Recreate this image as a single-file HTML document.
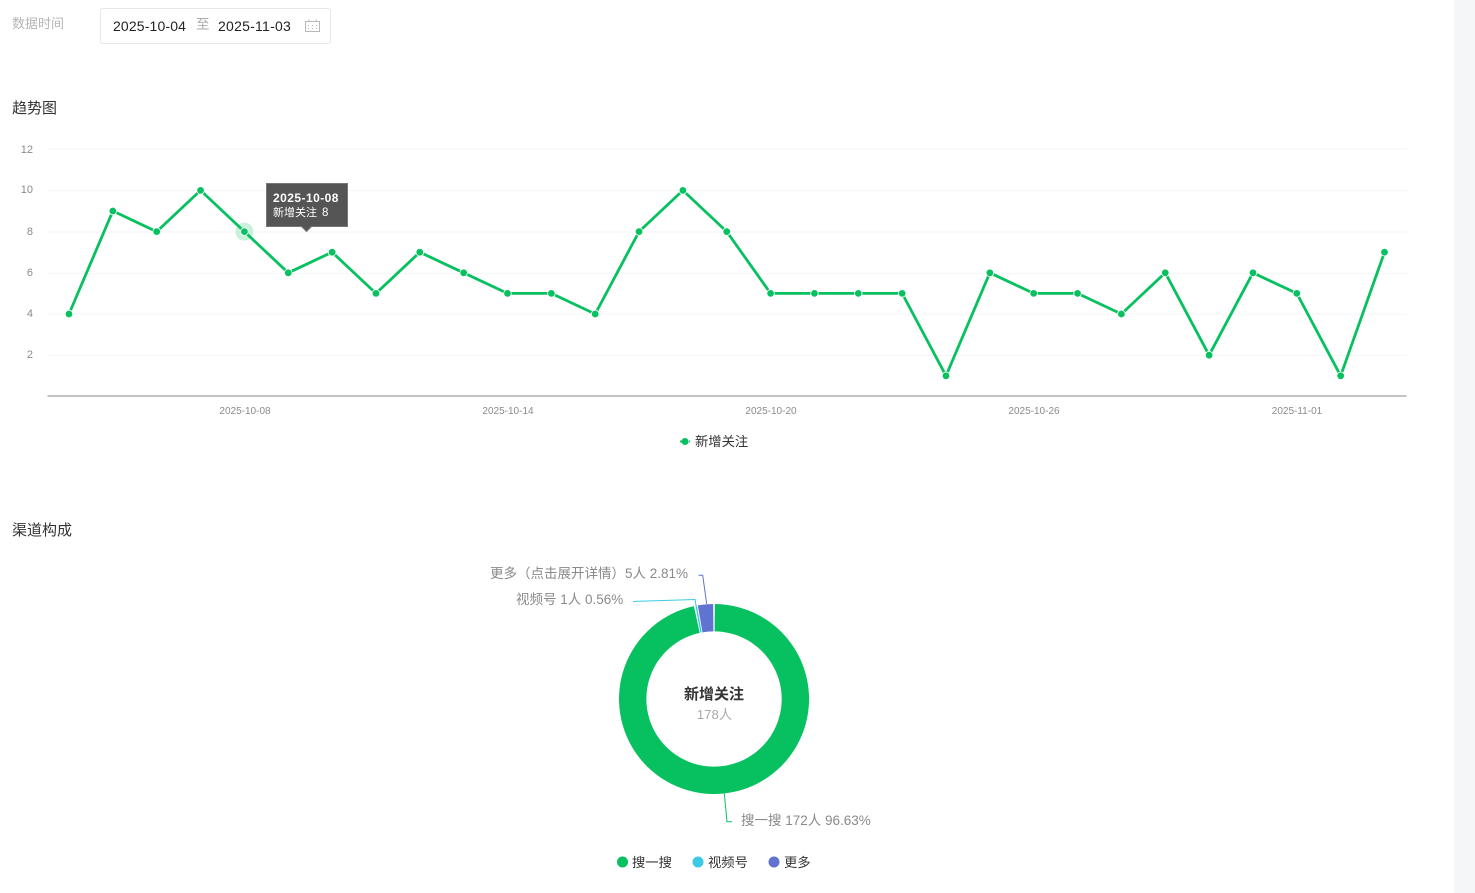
<!DOCTYPE html>
<html lang="zh-CN">
<head>
<meta charset="utf-8">
<title>数据趋势</title>
<style>
html,body{margin:0;padding:0;background:#fff;width:1475px;height:893px;overflow:hidden}
body{position:relative;font-family:"Liberation Sans","Noto Sans CJK SC",sans-serif}
.side{position:absolute;left:1454px;top:0;width:21px;height:893px;background:#f5f6f8}
.t{position:absolute;white-space:nowrap;line-height:20px}
.box{position:absolute;left:100px;top:8px;width:229px;height:34px;border:1px solid #e7e7eb;border-radius:3px}
svg{position:absolute;left:0;top:0}
</style>
</head>
<body>
<div class="side"></div>
<div class="t" style="left:12px;top:14px;font-size:13px;color:#b5b5b5">数据时间</div>
<div class="box"></div>
<div class="t" style="left:113px;top:16px;font-size:14px;letter-spacing:.15px;color:#222">2025-10-04</div>
<div class="t" style="left:196px;top:15px;font-size:13.500px;color:#aaa">至</div>
<div class="t" style="left:218px;top:16px;font-size:14px;letter-spacing:.25px;color:#222">2025-11-03</div>
<div class="t" style="left:12px;top:99px;font-size:15px;color:#333">趋势图</div>
<div class="t" style="left:12px;top:521px;font-size:15px;color:#333">渠道构成</div>

<svg width="1475" height="893" viewBox="0 0 1475 893" xmlns="http://www.w3.org/2000/svg">
  <!-- calendar icon -->
  <g fill="none" stroke="#b8b8b8" stroke-width="1">
    <rect x="305.500" y="21.500" width="14" height="10"/>
    <path d="M309 19.500v2M316 19.500v2"/>
    <path d="M308 25.500h1M312 25.500h1M316 25.500h1M308 28.500h1M312 28.500h1M316 28.500h1"/>
  </g>

  <!-- grid -->
  <g stroke="#f6f6f6" stroke-width="1">
    <path d="M48 149h1359M48 190.500h1359M48 232h1359M48 273.500h1359M48 314h1359M48 355.500h1359"/>
  </g>
  <path d="M47.500 396h1359" stroke="#c4c4c4" stroke-width="2"/>
  <g font-size="11" fill="#8a8a8a" text-anchor="end" font-family="'Liberation Sans',sans-serif">
    <text x="33" y="153">12</text>
    <text x="33" y="193">10</text>
    <text x="33" y="235">8</text>
    <text x="33" y="276">6</text>
    <text x="33" y="317">4</text>
    <text x="33" y="358">2</text>
  </g>
  <g font-size="10" fill="#8a8a8a" text-anchor="middle" font-family="'Liberation Sans',sans-serif">
    <text x="245" y="414">2025-10-08</text>
    <text x="508" y="414">2025-10-14</text>
    <text x="771" y="414">2025-10-20</text>
    <text x="1034" y="414">2025-10-26</text>
    <text x="1297" y="414">2025-11-01</text>
  </g>

  <!-- line -->
  <g transform="translate(0 .4)">
  <polyline fill="none" stroke="#07c160" stroke-width="2.800" stroke-linejoin="round" points="69,313.6 112.85,210.6 156.7,231.2 200.55,190 244.4,231.2 288.25,272.4 332.1,251.8 375.95,293 419.8,251.8 463.65,272.4 507.5,293 551.35,293 595.2,313.6 639.05,231.2 682.9,190 726.75,231.2 770.6,293 814.45,293 858.3,293 902.15,293 946,375.4 989.85,272.4 1033.7,293 1077.55,293 1121.4,313.6 1165.25,272.4 1209.1,354.8 1252.95,272.4 1296.8,293 1340.65,375.4 1384.5,251.8"/>
  <circle cx="244.400" cy="231.200" r="9" fill="#07c160" opacity=".22"/>
  <g fill="#07c160" stroke="#fff" stroke-width=".8">
    <circle cx="69" cy="313.6" r="3.800"/><circle cx="112.85" cy="210.6" r="3.800"/><circle cx="156.7" cy="231.2" r="3.800"/><circle cx="200.55" cy="190" r="3.800"/><circle cx="244.4" cy="231.2" r="3.800"/><circle cx="288.25" cy="272.4" r="3.800"/><circle cx="332.1" cy="251.8" r="3.800"/><circle cx="375.95" cy="293" r="3.800"/><circle cx="419.8" cy="251.8" r="3.800"/><circle cx="463.65" cy="272.4" r="3.800"/><circle cx="507.5" cy="293" r="3.800"/><circle cx="551.35" cy="293" r="3.800"/><circle cx="595.2" cy="313.6" r="3.800"/><circle cx="639.05" cy="231.2" r="3.800"/><circle cx="682.9" cy="190" r="3.800"/><circle cx="726.75" cy="231.2" r="3.800"/><circle cx="770.6" cy="293" r="3.800"/><circle cx="814.45" cy="293" r="3.800"/><circle cx="858.3" cy="293" r="3.800"/><circle cx="902.15" cy="293" r="3.800"/><circle cx="946" cy="375.4" r="3.800"/><circle cx="989.85" cy="272.4" r="3.800"/><circle cx="1033.7" cy="293" r="3.800"/><circle cx="1077.55" cy="293" r="3.800"/><circle cx="1121.4" cy="313.6" r="3.800"/><circle cx="1165.25" cy="272.4" r="3.800"/><circle cx="1209.1" cy="354.8" r="3.800"/><circle cx="1252.95" cy="272.4" r="3.800"/><circle cx="1296.8" cy="293" r="3.800"/><circle cx="1340.65" cy="375.4" r="3.800"/><circle cx="1384.5" cy="251.8" r="3.800"/>
  </g>
  </g>

  <!-- tooltip -->
  <path d="M266.500 183.500h81v43h-36l-5 5-5-5h-35z" fill="#555" stroke="#777" stroke-width="1"/>
  <text x="273" y="202" font-size="12" font-weight="700" letter-spacing=".45" fill="#fff" font-family="'Liberation Sans',sans-serif">2025-10-08</text>
  <text x="273" y="216" font-size="11" fill="#fff" font-family="'Liberation Sans','Noto Sans CJK SC',sans-serif">新增关注</text>
  <text x="322" y="216" font-size="11.500" fill="#fff" font-family="'Liberation Sans',sans-serif">8</text>

  <!-- line legend -->
  <path d="M680 441.500h10" stroke="#07c160" stroke-width="2" stroke-dasharray="2 1"/>
  <circle cx="685" cy="441.500" r="3.500" fill="#07c160"/>
  <text x="695" y="446" font-size="13.300" fill="#333" font-family="'Liberation Sans','Noto Sans CJK SC',sans-serif">新增关注</text>

  <!-- donut -->
  <g transform="translate(714 699) scale(.995) translate(-714 -699)">
  <path d="M714.83 603.500A95.500 95.500 0 1 1 693.82 605.660L699.63 632.540A68 68 0 1 0 714.590 631Z" fill="#07c160"/>
  <path d="M695.450 605.300L696.760 605.070L701.730 632.110L700.790 632.290Z" fill="#3bc9e6"/>
  <path d="M697.740 604.900A95.500 95.500 0 0 1 713.170 603.500L713.410 631A68 68 0 0 0 702.430 631.990Z" fill="#6173d0"/>
  </g>

  <!-- leader lines -->
  <path d="M698.500 575.200H702.700L706.700 604" fill="none" stroke="#6173d0" stroke-width="1"/>
  <path d="M633 601.500L695 599.500L700.700 632" fill="none" stroke="#3bc9e6" stroke-width="1"/>
  <path d="M724.300 793.500L727 821.800H732" fill="none" stroke="#07c160" stroke-width="1"/>

  <g font-family="'Liberation Sans','Noto Sans CJK SC',sans-serif">
    <text x="490" y="578" font-size="13.500" fill="#8a8a8a">更多（点击展开详情）</text>
    <text x="625" y="578" font-size="13.500" fill="#8a8a8a">5人 2.81%</text>
    <text x="516" y="604" font-size="13.500" fill="#8a8a8a">视频号 1人 0.56%</text>
    <text x="741" y="825" font-size="13.500" fill="#8a8a8a">搜一搜 172人 96.63%</text>
    <text x="714" y="699" font-size="15" font-weight="700" fill="#333" text-anchor="middle">新增关注</text>
    <text x="714.500" y="719" font-size="13.300" fill="#aaa" text-anchor="middle">178人</text>
    <circle cx="622.500" cy="862" r="5.500" fill="#07c160"/>
    <text x="632" y="867" font-size="13.300" fill="#333">搜一搜</text>
    <circle cx="698" cy="862" r="5.500" fill="#3bc9e6"/>
    <text x="708" y="867" font-size="13.300" fill="#333">视频号</text>
    <circle cx="774" cy="862" r="5.500" fill="#6173d0"/>
    <text x="784" y="867" font-size="13.300" fill="#333">更多</text>
  </g>
</svg>
</body>
</html>
